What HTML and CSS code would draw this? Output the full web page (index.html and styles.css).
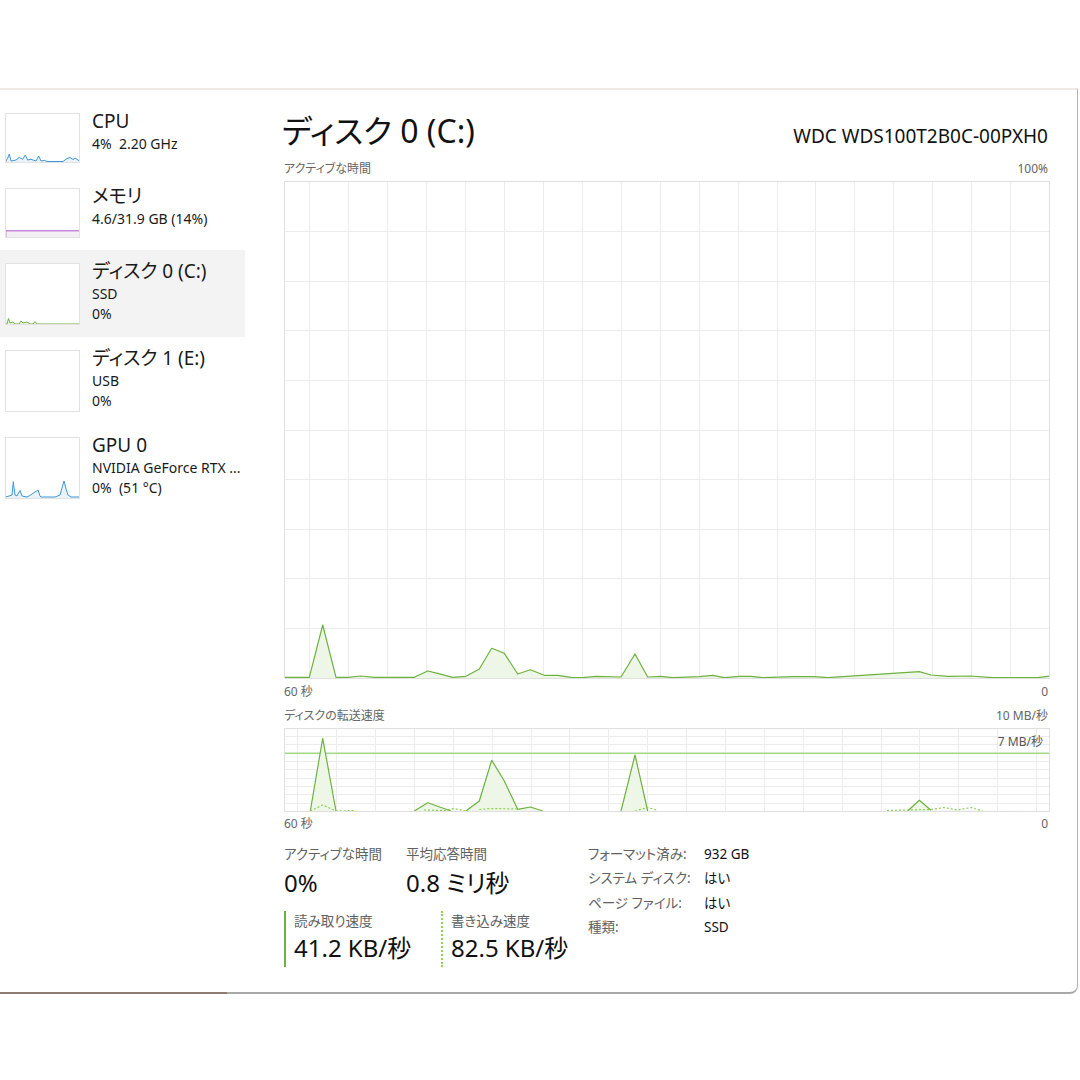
FILE: index.html
```html
<!DOCTYPE html>
<html lang="ja">
<head>
<meta charset="utf-8">
<title>タスク マネージャー - ディスク</title>
<link rel="stylesheet" href="styles.css">
</head>
<body>
<div class="screen">
  <div class="window">
    <aside class="sidebar">
      <div class="item">
        <svg class="thumb thumb-2" viewBox="0 0 75 50">
          <polygon class="cpu-fill" points="0.5,49 2.6,45.3 4.3,41 6,48 11,47 14.3,44.3 17.6,46.3 20.3,42 22.6,47 26,46.3 31,48 33.6,43 36,48 39.3,47.3 42,48.5 58,48.5 62,45.5 65,44.5 68,46.5 70,45 73,47 74.5,48 74.5,49.5 0.5,49.5"/>
          <polyline class="cpu-line" points="0.5,49 2.6,45.3 4.3,41 6,48 11,47 14.3,44.3 17.6,46.3 20.3,42 22.6,47 26,46.3 31,48 33.6,43 36,48 39.3,47.3 42,48.5 58,48.5 62,45.5 65,44.5 68,46.5 70,45 73,47 74.5,48"/>
          <rect class="thumb-frame" x="0.5" y="0.5" width="74" height="49"/>
        </svg>
        <div class="info">
          <div class="name">CPU</div>
          <div class="sub">4%  2.20 GHz</div>
        </div>
      </div>
      <div class="item">
        <svg class="thumb thumb-2" viewBox="0 0 75 50">
          <polygon class="mem-fill" points="0.5,42.7 74.5,42.7 74.5,49.5 0.5,49.5"/>
          <polyline class="mem-line" points="0.8,49.5 0.8,42.7 74.5,42.7"/>
          <rect class="thumb-frame" x="0.5" y="0.5" width="74" height="49"/>
        </svg>
        <div class="info">
          <div class="name">メモリ</div>
          <div class="sub">4.6/31.9 GB (14%)</div>
        </div>
      </div>
      <div class="item selected">
        <svg class="thumb thumb-3" viewBox="0 0 75 62">
          <polygon class="disk-fill" points="0.5,61.5 2,61 3.5,55.5 5,60 8,59 10,61 14,61 16,58 18,60 22,59 25,61 28,61 30,58.5 32,61 74.5,61 74.5,61.5"/>
          <polyline class="disk-line" points="0.5,61 2,61 3.5,55.5 5,60 8,59 10,61 14,61 16,58 18,60 22,59 25,61 28,61 30,58.5 32,61 74.5,61"/>
          <rect class="thumb-frame" x="0.5" y="0.5" width="74" height="61"/>
        </svg>
        <div class="info">
          <div class="name">ディスク 0 (C:)</div>
          <div class="sub">SSD</div>
          <div class="sub">0%</div>
        </div>
      </div>
      <div class="item">
        <svg class="thumb thumb-3" viewBox="0 0 75 62">
          <rect class="thumb-frame" x="0.5" y="0.5" width="74" height="61"/>
        </svg>
        <div class="info">
          <div class="name">ディスク 1 (E:)</div>
          <div class="sub">USB</div>
          <div class="sub">0%</div>
        </div>
      </div>
      <div class="item">
        <svg class="thumb thumb-3" viewBox="0 0 75 62">
          <polygon class="cpu-fill" points="0.5,61.5 0.5,60 4,59 7,58 8.3,44.7 10,58 12,59 13,57 15,53.5 17,59 22,60 24,59 33,53 35,59 36,60 50,60 55,58 59,44 61,52 63,58 66,60 74.5,60 74.5,61.5"/>
          <polyline class="cpu-line" points="0.5,60 4,59 7,58 8.3,44.7 10,58 12,59 13,57 15,53.5 17,59 22,60 24,59 33,53 35,59 36,60 50,60 55,58 59,44 61,52 63,58 66,60 74.5,60"/>
          <rect class="thumb-frame" x="0.5" y="0.5" width="74" height="61"/>
        </svg>
        <div class="info">
          <div class="name">GPU 0</div>
          <div class="sub">NVIDIA GeForce RTX ...</div>
          <div class="sub">0%  (51 °C)</div>
        </div>
      </div>
    </aside>

    <main class="main">
      <div class="head">
        <h1 class="title">ディスク 0 (C:)</h1>
        <div class="model">WDC WDS100T2B0C-00PXH0</div>
      </div>

      <div class="axis axis-top"><span>アクティブな時間</span><span>100%</span></div>
      <svg class="graph graph-main" viewBox="0 0 766 498">
        <path class="grid" d="M0 50.5H766M0 100.5H766M0 149.5H766M0 199.5H766M0 249.5H766M0 298.5H766M0 348.5H766M0 397.5H766M0 447.5H766M25.5 0V498M64.5 0V498M103.5 0V498M142.5 0V498M181.5 0V498M220.5 0V498M259.5 0V498M298.5 0V498M337.5 0V498M376.5 0V498M415.5 0V498M454.5 0V498M493.5 0V498M531.5 0V498M570.5 0V498M609.5 0V498M648.5 0V498M687.5 0V498M726.5 0V498"/>
        <polygon class="fill" points="0,496.3 25.3,496.3 38.7,444 52,496.3 63.7,496.3 77,495 90.3,496.3 130.3,496.3 143.7,490 153.7,492.3 168.7,496.3 182,495.3 195.3,488 207.7,467.3 220.3,472.3 233.7,493 246.3,488.7 260.3,494.3 273.7,494.3 287,496.3 298.7,496.7 312,495.3 337,496 351,473 363.7,496 377,495.3 388.7,496.7 415.3,495.7 428.7,494.3 440.3,496.7 455.3,495.3 467,495.3 478.7,496.7 510.3,495.7 530.3,495.7 543.7,496.7 635.3,490.7 647,494 663.7,495.3 687,495 708.7,496.7 753.7,496.7 763.7,495.3 766,495 766,497.5 0,497.5"/>
        <polyline class="line" points="0,496.3 25.3,496.3 38.7,444 52,496.3 63.7,496.3 77,495 90.3,496.3 130.3,496.3 143.7,490 153.7,492.3 168.7,496.3 182,495.3 195.3,488 207.7,467.3 220.3,472.3 233.7,493 246.3,488.7 260.3,494.3 273.7,494.3 287,496.3 298.7,496.7 312,495.3 337,496 351,473 363.7,496 377,495.3 388.7,496.7 415.3,495.7 428.7,494.3 440.3,496.7 455.3,495.3 467,495.3 478.7,496.7 510.3,495.7 530.3,495.7 543.7,496.7 635.3,490.7 647,494 663.7,495.3 687,495 708.7,496.7 753.7,496.7 763.7,495.3 766,495"/>
        <rect class="frame" x="0.5" y="0.5" width="765" height="497"/>
      </svg>
      <div class="axis axis-mid"><span>60 秒</span><span>0</span></div>
      <div class="axis axis-top"><span>ディスクの転送速度</span><span>10 MB/秒</span></div>

      <div class="graph-wrap">
        <svg class="graph graph-xfer" viewBox="0 0 766 84">
          <path class="grid" d="M0 8.5H766M0 16.5H766M0 33.5H766M0 41.5H766M0 50.5H766M0 58.5H766M0 66.5H766M0 75.5H766M13.5 0V84M52.5 0V84M91.5 0V84M130.5 0V84M169.5 0V84M208.5 0V84M247.5 0V84M285.5 0V84M324.5 0V84M363.5 0V84M402.5 0V84M441.5 0V84M480.5 0V84M519.5 0V84M558.5 0V84M597.5 0V84M635.5 0V84M674.5 0V84M713.5 0V84M752.5 0V84"/>
          <rect class="limit" x="0" y="24.5" width="766" height="1.6"/>
          <polygon class="fill" points="0,83 26.3,83 38.7,10.3 52,83 130.3,83 143.7,74.7 167,83 182,83 195.3,73 207.7,32.3 220.3,53 233.7,81.3 246.3,79 258.7,83 337,83 351,27 363.7,83 623.7,83 635.3,72.3 647,82.3 766,83 766,83.5 0,83.5"/>
          <polyline class="line" points="26.3,83 38.7,10.3 52,83"/>
          <polyline class="line" points="130.3,83 143.7,74.7 167,83"/>
          <polyline class="line" points="182,83 195.3,73 207.7,32.3 220.3,53 233.7,81.3 246.3,79 258.7,83"/>
          <polyline class="line" points="337,83 351,27 363.7,83"/>
          <polyline class="line" points="623.7,83 635.3,72.3 647,82.3"/>
          <polyline class="dash" points="26.3,83 38.7,77 52,83 70,82.5"/>
          <polyline class="dash" points="140,82 160,82.5 170,80.5 182,83"/>
          <polyline class="dash" points="195.3,81.5 207.7,80.5 233.7,81"/>
          <polyline class="dash" points="351,83 363.7,79.5 374,82.5"/>
          <polyline class="dash" points="603,82.5 623.7,82 647,81.5 660.3,79.5 673.7,82 687,79.5 698.7,83"/>
          <rect class="frame" x="0.5" y="0.5" width="765" height="83"/>
        </svg>
        <span class="limit-label">7 MB/秒</span>
      </div>
      <div class="axis axis-bottom"><span>60 秒</span><span>0</span></div>

      <div class="stats">
        <div class="stats-left">
          <div class="stat-row">
            <div class="stat stat-a">
              <div class="stat-label">アクティブな時間</div>
              <div class="stat-value">0%</div>
            </div>
            <div class="stat">
              <div class="stat-label">平均応答時間</div>
              <div class="stat-value">0.8 ミリ秒</div>
            </div>
          </div>
          <div class="stat-row rates">
            <div class="rate rate-read">
              <div class="stat-label">読み取り速度</div>
              <div class="stat-value">41.2 KB/秒</div>
            </div>
            <div class="rate rate-write">
              <div class="stat-label">書き込み速度</div>
              <div class="stat-value">82.5 KB/秒</div>
            </div>
          </div>
        </div>
        <dl class="props">
          <div class="prop"><dt>フォーマット済み:</dt><dd>932 GB</dd></div>
          <div class="prop"><dt>システム ディスク:</dt><dd>はい</dd></div>
          <div class="prop"><dt>ページ ファイル:</dt><dd>はい</dd></div>
          <div class="prop"><dt>種類:</dt><dd>SSD</dd></div>
        </dl>
      </div>
    </main>
  </div>
</div>
</body>
</html>
```

FILE: styles.css
```css
* { box-sizing: border-box; }

html, body {
  margin: 0;
  padding: 0;
  background: #ffffff;
}

body {
  width: 1080px;
  height: 1080px;
  overflow: hidden;
  font-family: "Noto Sans", "Noto Sans CJK JP", sans-serif;
  font-feature-settings: "palt";
  color: #1a1a1a;
}

.screen {
  padding-top: 88px;
}

.window {
  position: relative;
  width: 1078px;
  height: 906px;
  display: flex;
  background: #ffffff;
  border-top: 2px solid #efe9e4;
  border-right: 1px solid #b4b4b4;
  border-bottom: 2px solid #a9a9a9;
  border-bottom-right-radius: 8px;
}

.window::after {
  content: "";
  position: absolute;
  left: 0;
  bottom: -2px;
  width: 227px;
  height: 2px;
  background: #8d7d73;
}

/* ---------- sidebar ---------- */
.sidebar {
  width: 245px;
  flex: none;
  padding-top: 10px;
}

.item {
  display: flex;
  align-items: flex-start;
  gap: 12px;
  padding: 13px 0 12px 5px;
}

.item.selected {
  background: #f3f3f3;
}

.thumb {
  display: block;
  flex: none;
  width: 75px;
  background: #ffffff;
}

.thumb-2 { height: 50px; }
.thumb-3 { height: 62px; }

.thumb-frame {
  fill: none;
  stroke: #e2e2e2;
  stroke-width: 1;
}

.cpu-line { fill: none; stroke: #3f97d6; stroke-width: 1; }
.cpu-fill { fill: #eaf3fa; }
.mem-line { fill: none; stroke: #c58bd8; stroke-width: 1.4; }
.mem-fill { fill: #f3f0f5; }
.disk-line { fill: none; stroke: #70b040; stroke-width: 1; }
.disk-fill { fill: #eef6e8; }

.info {
  min-width: 0;
}

.name {
  font-size: 19px;
  line-height: 20px;
  margin: -2px 0 3px;
  white-space: nowrap;
}

.sub {
  font-size: 14px;
  line-height: 20px;
  white-space: pre;
}

/* ---------- main ---------- */
.main {
  flex: 1;
  min-width: 0;
  padding: 19px 29px 0 39px;
}

.head {
  height: 48px;
  display: flex;
  justify-content: space-between;
  align-items: baseline;
}

.title {
  margin: 0 0 0 -2px;
  font-size: 32px;
  line-height: 44px;
  font-weight: 400;
  color: #111111;
}

.model {
  font-size: 19px;
  color: #111111;
}

.axis {
  display: flex;
  justify-content: space-between;
  font-size: 12px;
  color: #666666;
}

.axis-top { height: 24px; line-height: 24px; }
.axis-mid { height: 25px; line-height: 25px; }
.axis-bottom { height: 23px; line-height: 23px; }

.graph {
  display: block;
  width: 766px;
}

.graph-main { height: 498px; }
.graph-xfer { height: 84px; }

.grid {
  fill: none;
  stroke: #ececec;
  stroke-width: 1;
  shape-rendering: crispEdges;
}

.frame {
  fill: none;
  stroke: #e0e0e0;
  stroke-width: 1;
  shape-rendering: crispEdges;
}

.fill { fill: #eef6e8; }

.line {
  fill: none;
  stroke: #6db23f;
  stroke-width: 1.2;
  stroke-linejoin: round;
}

.dash {
  fill: none;
  stroke: #8ccf4e;
  stroke-width: 1.2;
  stroke-dasharray: 2 2;
}

.limit {
  fill: #a3da85;
  stroke: none;
}

.graph-wrap {
  position: relative;
}

.limit-label {
  position: absolute;
  right: 5px;
  top: 4px;
  font-size: 12px;
  line-height: 20px;
  color: #555555;
}

/* ---------- stats ---------- */
.stats {
  display: flex;
  margin-top: 7px;
}

.stats-left {
  width: 304px;
  flex: none;
}

.stat-row {
  display: flex;
}

.stat-a { width: 122px; }

.stat-label {
  font-size: 13.5px;
  line-height: 24px;
  color: #616161;
  white-space: nowrap;
}

.stat-value {
  font-size: 24px;
  line-height: 34px;
  color: #111111;
  white-space: nowrap;
}

.rates {
  margin-top: 11px;
}

.rate {
  padding-left: 8px;
  padding-bottom: 2px;
}

.rate .stat-label { line-height: 20px; }

.rate-read {
  width: 157px;
  border-left: 2px solid #6fb33f;
}

.rate-write {
  border-left: 2px dotted #8fd44a;
}

.props {
  margin: 0;
  padding: 0;
}

.prop {
  display: flex;
  font-size: 13.5px;
  line-height: 24.4px;
}

.prop dt {
  width: 116px;
  color: #616161;
  white-space: nowrap;
}

.prop dd {
  margin: 0;
  color: #111111;
}
```
